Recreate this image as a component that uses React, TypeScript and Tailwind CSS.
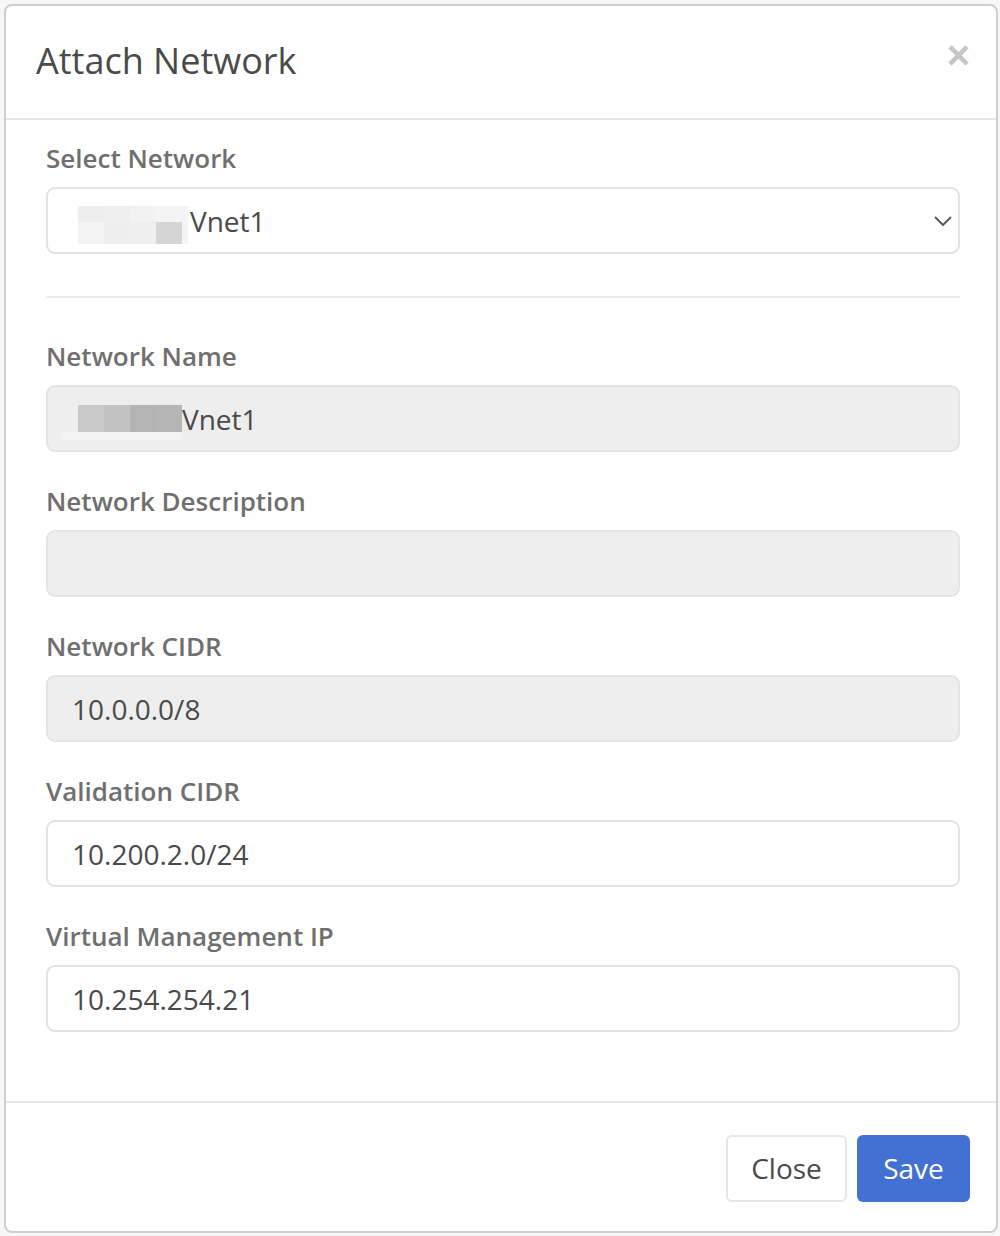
const FIELDS = [
  { label: 'Network Name', value: 'Vnet1', readOnly: true, redacted: true },
  { label: 'Network Description', value: '', readOnly: true },
  { label: 'Network CIDR', value: '10.0.0.0/8', readOnly: true },
  { label: 'Validation CIDR', value: '10.200.2.0/24', readOnly: false },
  { label: 'Virtual Management IP', value: '10.254.254.21', readOnly: false },
];

// pixelated redaction blocks seen in the screenshot
function SelectRedaction() {
  return (
    <div className="flex flex-col w-[110px] h-[38px] mt-[8px]">
      <div className="flex h-[16px]">
        <div className="w-[26px] bg-[#ededed]" />
        <div className="w-[26px] bg-[#efefef]" />
        <div className="w-[26px] bg-[#f2f2f2]" />
        <div className="w-[32px] bg-[#f4f4f4]" />
      </div>
      <div className="flex h-[22px]">
        <div className="w-[26px] bg-[#f3f3f3]" />
        <div className="w-[26px] bg-[#eeeeee]" />
        <div className="w-[26px] bg-[#efefef]" />
        <div className="w-[26px] bg-[#d6d6d6]" />
        <div className="w-[6px] bg-[#f4f4f4]" />
      </div>
    </div>
  );
}

function NameRedaction() {
  return (
    <div className="flex flex-col -ml-[10px] mt-[8px]">
      <div className="flex h-[27px] pl-[16px]">
        <div className="w-[26px] bg-[#c9c9c9]" />
        <div className="w-[26px] bg-[#c2c2c2]" />
        <div className="w-[26px] bg-[#b4b4b4]" />
        <div className="w-[26px] bg-[#b6b6b6]" />
      </div>
      <div className="h-[8px] w-[120px] bg-[#f3f3f3]" />
    </div>
  );
}

export default function App() {
  return (
    <div
      className="w-[1000px] h-[1236px] bg-[#f7f7f7] pt-[4px] pl-[4px]"
      style={{ fontFamily: '"Open Sans", "Liberation Sans", sans-serif' }}
    >
      <div className="w-[994px] h-[1229px] bg-white border-2 border-[#cfcfcf] rounded-[8px] flex flex-col">
        <div className="h-[114px] border-b-2 border-[#e6e6e6] flex items-center justify-between pl-[30px] pr-[26px]">
          <h4 className="text-[36px] text-[#4a4a4a] leading-none -mt-[2px]">Attach Network</h4>
          <button
            className="text-[40px] font-bold text-[#c6c6c6] leading-none -mt-[14px]"
            style={{ fontFamily: '"Liberation Sans", sans-serif' }}
          >
            ×
          </button>
        </div>

        <div className="flex-1 pl-[40px] pr-[36px] pt-[20px]">
          <label className="block text-[26px] font-semibold text-[#6f6f6f] leading-[36px]">
            Select Network
          </label>
          <div className="mt-[11px] h-[67px] border-2 border-[#e3e3e3] rounded-[9px] flex items-center pl-[30px] pr-[6px] text-[28px] text-[#4a4a4a]">
            <SelectRedaction />
            <span className="flex-1 ml-[2px]">Vnet1</span>
            <svg width="18" height="11" viewBox="0 0 18 11" fill="none" className="mt-[1px]">
              <polyline
                points="1.5,1.5 9,9 16.5,1.5"
                stroke="#555"
                strokeWidth="1.8"
                strokeLinecap="round"
                strokeLinejoin="round"
              />
            </svg>
          </div>
          <div className="mt-[42px] h-[2px] bg-[#ececec]" />

          <div className="mt-[40px] flex flex-col gap-[31px]">
            {FIELDS.map((f) => (
              <div key={f.label} className="flex flex-col">
                <label className="block text-[26px] font-semibold text-[#6f6f6f] leading-[36px]">
                  {f.label}
                </label>
                <div
                  className={`mt-[11px] h-[67px] border-2 rounded-[9px] flex items-center pl-[24px] text-[28px] text-[#4a4a4a] ${
                    f.readOnly ? 'bg-[#eeeeee] border-[#e4e4e4]' : 'bg-white border-[#e3e3e3]'
                  }`}
                >
                  {f.redacted && <NameRedaction />}
                  <span>{f.value}</span>
                </div>
              </div>
            ))}
          </div>
        </div>

        <div className="h-[130px] border-t-2 border-[#e6e6e6] flex items-center justify-end gap-[10px] pr-[26px] pt-[2px]">
          <button className="h-[67px] w-[121px] border-2 border-[#e6e6e6] rounded-[6px] bg-white text-[28px] text-[#4a4a4a]">
            Close
          </button>
          <button className="h-[67px] w-[113px] rounded-[6px] bg-[#4371d3] text-[28px] text-white">
            Save
          </button>
        </div>
      </div>
    </div>
  );
}
